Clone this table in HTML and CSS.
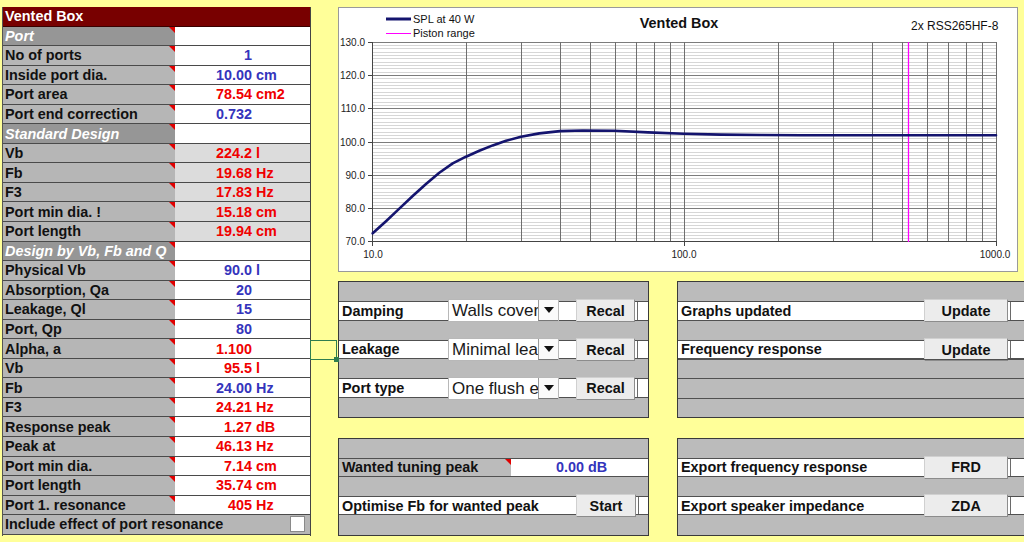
FILE: index.html
```html
<!DOCTYPE html>
<html>
<head>
<meta charset="utf-8">
<title>Vented Box</title>
<link rel="stylesheet" href="styles.css">
</head>
<body>
<div class="sheet">
  <div class="table">
    <div class="cell title">Vented Box</div>

    <div class="cell l sec mk">Port</div><div class="cell v sec"></div>
    <div class="cell l mk">No of ports</div><div class="cell v blue"><span class="n">1</span></div>
    <div class="cell l mk">Inside port dia.</div><div class="cell v blue"><span class="n">10.00</span><span class="u">cm</span></div>
    <div class="cell l mk">Port area</div><div class="cell v red"><span class="n">78.54</span><span class="u">cm2</span></div>
    <div class="cell l mk">Port end correction</div><div class="cell v blue"><span class="n">0.732</span></div>

    <div class="cell l sec mk">Standard Design</div><div class="cell v sec"></div>
    <div class="cell l mk">Vb</div><div class="cell v red lt"><span class="n">224.2</span><span class="u">l</span></div>
    <div class="cell l mk">Fb</div><div class="cell v red lt"><span class="n">19.68</span><span class="u">Hz</span></div>
    <div class="cell l mk">F3</div><div class="cell v red lt"><span class="n">17.83</span><span class="u">Hz</span></div>
    <div class="cell l mk">Port min dia. !</div><div class="cell v red lt"><span class="n">15.18</span><span class="u">cm</span></div>
    <div class="cell l mk">Port length</div><div class="cell v red lt"><span class="n">19.94</span><span class="u">cm</span></div>

    <div class="cell l sec mk">Design by Vb, Fb and Q</div><div class="cell v sec"></div>
    <div class="cell l mk">Physical Vb</div><div class="cell v blue"><span class="n">90.0</span><span class="u">l</span></div>
    <div class="cell l mk">Absorption, Qa</div><div class="cell v blue"><span class="n">20</span></div>
    <div class="cell l mk">Leakage, Ql</div><div class="cell v blue"><span class="n">15</span></div>
    <div class="cell l mk">Port, Qp</div><div class="cell v blue"><span class="n">80</span></div>
    <div class="cell l mk">Alpha, a</div><div class="cell v red"><span class="n">1.100</span></div>
    <div class="cell l mk">Vb</div><div class="cell v red"><span class="n">95.5</span><span class="u">l</span></div>
    <div class="cell l mk">Fb</div><div class="cell v blue"><span class="n">24.00</span><span class="u">Hz</span></div>
    <div class="cell l mk">F3</div><div class="cell v red"><span class="n">24.21</span><span class="u">Hz</span></div>
    <div class="cell l mk">Response peak</div><div class="cell v red"><span class="n">1.27</span><span class="u">dB</span></div>
    <div class="cell l mk">Peak at</div><div class="cell v red"><span class="n">46.13</span><span class="u">Hz</span></div>
    <div class="cell l mk">Port min dia.</div><div class="cell v red"><span class="n">7.14</span><span class="u">cm</span></div>
    <div class="cell l mk">Port length</div><div class="cell v red"><span class="n">35.74</span><span class="u">cm</span></div>
    <div class="cell l mk">Port 1. resonance</div><div class="cell v red"><span class="n">405</span><span class="u">Hz</span></div>

    <div class="cell l full">Include effect of port resonance<span class="check"></span></div>
  </div>

  <div class="right">
    <div class="chart">
      <svg width="680" height="265" viewBox="337 7 680 265" xmlns="http://www.w3.org/2000/svg">
        <rect x="337.5" y="7.5" width="679" height="264" fill="#fff" stroke="#9a9a9a"/>
        <!-- minor horizontal grid -->
        <path fill="none" stroke="#d6d6d6" stroke-width="1" d="M371 45.5H995M371 48.5H995M371 52.5H995M371 55.5H995M371 58.5H995M371 62.5H995M371 65.5H995M371 68.5H995M371 72.5H995
M371 78.5H995M371 82.5H995M371 85.5H995M371 88.5H995M371 92.5H995M371 95.5H995M371 98.5H995M371 102.5H995M371 105.5H995
M371 112.5H995M371 115.5H995M371 118.5H995M371 122.5H995M371 125.5H995M371 128.5H995M371 132.5H995M371 135.5H995M371 138.5H995
M371 145.5H995M371 148.5H995M371 152.5H995M371 155.5H995M371 158.5H995M371 162.5H995M371 165.5H995M371 168.5H995M371 172.5H995
M371 178.5H995M371 182.5H995M371 185.5H995M371 188.5H995M371 192.5H995M371 195.5H995M371 198.5H995M371 202.5H995M371 205.5H995
M371 212.5H995M371 215.5H995M371 218.5H995M371 222.5H995M371 225.5H995M371 228.5H995M371 232.5H995M371 235.5H995M371 238.5H995"/>
        <!-- major horizontal grid -->
        <path fill="none" stroke="#7c7c7c" stroke-width="1" d="M371 42.5H996M371 75.5H996M371 108.5H996M371 142.5H996M371 175.5H996M371 208.5H996"/>
        <!-- vertical grid -->
        <path fill="none" stroke="#6e6e6e" stroke-width="1" d="M465.5 42V242M520.5 42V242M559.5 42V242M589.5 42V242M614.5 42V242M635.5 42V242M653.5 42V242M669.5 42V242M683.5 42V242M777.5 42V242M832.5 42V242M871.5 42V242M901.5 42V242M926.5 42V242M947.5 42V242M965.5 42V242M981.5 42V242M995.5 42V242"/>
        <!-- axes -->
        <path fill="none" stroke="#444" stroke-width="1" d="M371.5 42V242M371 241.5H996M367 42.5H371M367 75.5H371M367 108.5H371M367 142.5H371M367 175.5H371M367 208.5H371M367 241.5H371M371.5 242V246M683.5 242V246M995.5 242V246"/>
        <!-- piston range -->
        <line x1="907.5" y1="42" x2="907.5" y2="242" stroke="#ff00ff" stroke-width="1.3"/>
        <!-- SPL curve -->
        <polyline fill="none" stroke="#14146e" stroke-width="2.6" stroke-linejoin="round" stroke-linecap="round"
          points="371.7,233.3 385,221.2 398.3,208.6 411.7,196 425,184 438.3,172.8 451.7,163.4 465,156.7 478.3,150.7 491.7,145.4 505,140.8 520,136.8 538.3,133.4 559,131.1 581.7,130.5 613,130.8 647,132.4 683,133.8 720,134.6 760,135 800,135.2 995,135.2"/>
        <!-- legend -->
        <line x1="385" y1="19" x2="410" y2="19" stroke="#14146e" stroke-width="3"/>
        <text x="412" y="23" class="ct">SPL at 40 W</text>
        <line x1="385" y1="33.5" x2="410" y2="33.5" stroke="#ff00ff" stroke-width="1"/>
        <text x="412" y="37" class="ct">Piston range</text>
        <!-- titles -->
        <text x="678" y="27.5" class="ctitle" text-anchor="middle">Vented Box</text>
        <text x="910" y="30" class="csub">2x RSS265HF-8</text>
        <!-- y labels -->
        <text x="364" y="46" class="ax" text-anchor="end">130.0</text>
        <text x="364" y="79" class="ax" text-anchor="end">120.0</text>
        <text x="364" y="112" class="ax" text-anchor="end">110.0</text>
        <text x="364" y="146" class="ax" text-anchor="end">100.0</text>
        <text x="364" y="179" class="ax" text-anchor="end">90.0</text>
        <text x="364" y="212" class="ax" text-anchor="end">80.0</text>
        <text x="364" y="245" class="ax" text-anchor="end">70.0</text>
        <!-- x labels -->
        <text x="372" y="258" class="ax" text-anchor="middle">10.0</text>
        <text x="683" y="258" class="ax" text-anchor="middle">100.0</text>
        <text x="994" y="258" class="ax" text-anchor="middle">1000.0</text>
      </svg>
    </div>

    <div class="panels top">
      <div class="panel p7 narrow">
        <div class="pr"></div>
        <div class="pr w">
          <div class="pl lbl-a">Damping</div>
          <div class="dd"><div class="dd-t">Walls covered</div><div class="dd-a"><svg width="10" height="6" viewBox="0 0 10 6"><polygon points="0,0 10,0 5,6" fill="#111"/></svg></div></div>
          <div class="btn recal">Recal</div>
          <div class="tail"></div>
        </div>
        <div class="pr"></div>
        <div class="pr w">
          <div class="pl lbl-a">Leakage</div>
          <div class="dd"><div class="dd-t">Minimal leakage</div><div class="dd-a"><svg width="10" height="6" viewBox="0 0 10 6"><polygon points="0,0 10,0 5,6" fill="#111"/></svg></div></div>
          <div class="btn recal">Recal</div>
          <div class="tail"></div>
        </div>
        <div class="pr"></div>
        <div class="pr w">
          <div class="pl lbl-a">Port type</div>
          <div class="dd"><div class="dd-t">One flush end</div><div class="dd-a"><svg width="10" height="6" viewBox="0 0 10 6"><polygon points="0,0 10,0 5,6" fill="#111"/></svg></div></div>
          <div class="btn recal">Recal</div>
          <div class="tail"></div>
        </div>
        <div class="pr"></div>
      </div>

      <div class="panel p7 wide">
        <div class="pr"></div>
        <div class="pr w">
          <div class="pl lbl-b">Graphs updated</div>
          <div class="btn upd">Update</div>
          <div class="tail"></div>
        </div>
        <div class="pr"></div>
        <div class="pr w">
          <div class="pl lbl-b">Frequency response</div>
          <div class="btn upd">Update</div>
          <div class="tail"></div>
        </div>
        <div class="pr lined"></div>
        <div class="pr lined"></div>
        <div class="pr lined"></div>
      </div>
    </div>

    <div class="panels bottom">
      <div class="panel p5 narrow">
        <div class="pr"></div>
        <div class="pr w">
          <div class="pl lbl-c mk">Wanted tuning peak</div>
          <div class="pv blue"><span class="n">0.00</span><span class="u">dB</span></div>
        </div>
        <div class="pr"></div>
        <div class="pr w">
          <div class="pl lbl-d">Optimise Fb for wanted peak</div>
          <div class="btn start">Start</div>
          <div class="tail"></div>
        </div>
        <div class="pr"></div>
      </div>

      <div class="panel p5 wide">
        <div class="pr"></div>
        <div class="pr w">
          <div class="pl lbl-b">Export frequency response</div>
          <div class="btn upd">FRD</div>
          <div class="tail"></div>
        </div>
        <div class="pr"></div>
        <div class="pr w">
          <div class="pl lbl-b">Export speaker impedance</div>
          <div class="btn upd">ZDA</div>
          <div class="tail"></div>
        </div>
        <div class="pr"></div>
      </div>
    </div>
  </div>

  <div class="selection"><span class="handle"></span></div>
</div>
</body>
</html>
```

FILE: styles.css
```css
body {
  margin: 0;
  width: 1024px;
  height: 542px;
  overflow: hidden;
  background: #ffff99;
  font-family: "Liberation Sans", Arial, Helvetica, sans-serif;
  font-size: 14.4px;
  font-weight: bold;
  color: #111;
}

.sheet {
  position: relative;
  display: flex;
  gap: 27px;
  padding: 7px 0 0 2px;
}

/* ---------- left table ---------- */
.table {
  flex: none;
  display: grid;
  grid-template-columns: 172px 135px;
  grid-auto-rows: 19.56px;
  border-left: 1px solid #555;
  border-right: 1px solid #444;
}

.cell {
  box-sizing: border-box;
  border-bottom: 1px solid #4a4a4a;
  display: flex;
  align-items: center;
  white-space: nowrap;
}

.title {
  grid-column: 1 / -1;
  background: #780000;
  color: #fff;
  padding-left: 2px;
  border-bottom-color: #3a0000;
}

.l {
  position: relative;
  background: #b6b6b6;
  padding-left: 2px;
}

.mk::after {
  content: "";
  position: absolute;
  top: 0;
  right: 0;
  border-top: 6px solid #e00000;
  border-left: 6px solid transparent;
}

.sec {
  background: #969696;
  color: #fff;
  font-style: italic;
}

.l.sec {
  overflow: visible;
  z-index: 1;
}

.v {
  background: #fff;
}

.v.lt {
  background: #dcdcdc;
}

.n {
  display: inline-block;
  width: 77px;
  text-align: right;
}

.u {
  margin-left: 4px;
}

.blue { color: #3434bc; }
.red { color: #f00000; }

.full {
  grid-column: 1 / -1;
  justify-content: space-between;
}

.check {
  width: 15px;
  height: 16px;
  box-sizing: border-box;
  background: #fff;
  border: 1px solid #8a8a8a;
  margin-right: 5px;
}

/* ---------- right column ---------- */
.right {
  flex: none;
  width: 700px;
  display: flex;
  flex-direction: column;
}

.chart {
  width: 680px;
  height: 265px;
}

.chart svg {
  display: block;
}

.ct {
  font-family: "Liberation Sans", Arial, sans-serif;
  font-weight: normal;
  font-size: 11px;
  fill: #111;
}

.ctitle {
  font-family: "Liberation Sans", Arial, sans-serif;
  font-weight: bold;
  font-size: 14.4px;
  fill: #111;
}

.csub {
  font-family: "Liberation Sans", Arial, sans-serif;
  font-weight: normal;
  font-size: 12px;
  fill: #111;
}

.ax {
  font-family: "Liberation Sans", Arial, sans-serif;
  font-weight: normal;
  font-size: 10px;
  fill: #222;
}

.panels {
  display: flex;
  gap: 28px;
}

.panels.top {
  margin-top: 9px;
}

.panels.bottom {
  margin-top: 19.5px;
}

.panel {
  flex: none;
  box-sizing: border-box;
  border: 1px solid #3a3a3a;
  background: #bbbbbb;
  display: grid;
}

.panel.narrow { width: 311px; }
.panel.wide { width: 360px; }

.p7 {
  height: 137px;
  grid-template-rows: repeat(7, minmax(0, 1fr));
}

.p5 {
  height: 98px;
  grid-template-rows: repeat(5, minmax(0, 1fr));
}

.pr {
  box-sizing: border-box;
  display: flex;
  align-items: center;
  min-height: 0;
  white-space: nowrap;
}

.pr.w {
  background: #fff;
  border-top: 1px solid #505050;
  border-bottom: 1px solid #505050;
}

.pr.lined {
  border-top: 1px solid #505050;
}

.pl {
  box-sizing: border-box;
  align-self: stretch;
  display: flex;
  align-items: center;
  padding-left: 3px;
  position: relative;
}

.lbl-a { width: 109px; }
.lbl-b { width: 246px; }
.lbl-c { width: 172px; background: #bbbbbb; }
.lbl-d { width: 237px; }

.pv {
  flex: 1;
  display: flex;
  align-items: center;
}

.pv .n {
  width: 73px;
}

.dd {
  flex: none;
  box-sizing: border-box;
  width: 111px;
  height: 23px;
  background: #fff;
  border: 1px solid #b8b8b8;
  display: flex;
  font-weight: normal;
  font-size: 17px;
  color: #1a1a1a;
}

.dd-t {
  flex: 1;
  overflow: hidden;
  white-space: nowrap;
  padding-left: 3px;
  line-height: 21px;
}

.dd-a {
  flex: none;
  width: 20px;
  box-sizing: border-box;
  border-left: 1px solid #9a9a9a;
  border-bottom: 1px solid #777;
  background: #fafafa;
  display: flex;
  align-items: center;
  justify-content: center;
}

.btn {
  flex: none;
  box-sizing: border-box;
  height: 23px;
  background: #ececec;
  border: 1px solid #d0d0d0;
  border-right-color: #8c8c8c;
  border-bottom-color: #8c8c8c;
  display: flex;
  align-items: center;
  justify-content: center;
  color: #111;
}

.recal {
  width: 59px;
  margin-left: 17px;
}

.upd {
  width: 84px;
}

.start {
  width: 60px;
}

.tail {
  flex: 1;
  align-self: stretch;
  margin-left: 2px;
  border-left: 1px solid #6a6a6a;
}

/* ---------- cell selection overlay ---------- */
.selection {
  position: absolute;
  left: 310px;
  top: 339.5px;
  width: 27px;
  height: 20.5px;
  box-sizing: border-box;
  border: 1px solid #2f7d4f;
}

.handle {
  position: absolute;
  right: -3px;
  bottom: -3px;
  width: 5px;
  height: 5px;
  background: #2f7d4f;
}
```
